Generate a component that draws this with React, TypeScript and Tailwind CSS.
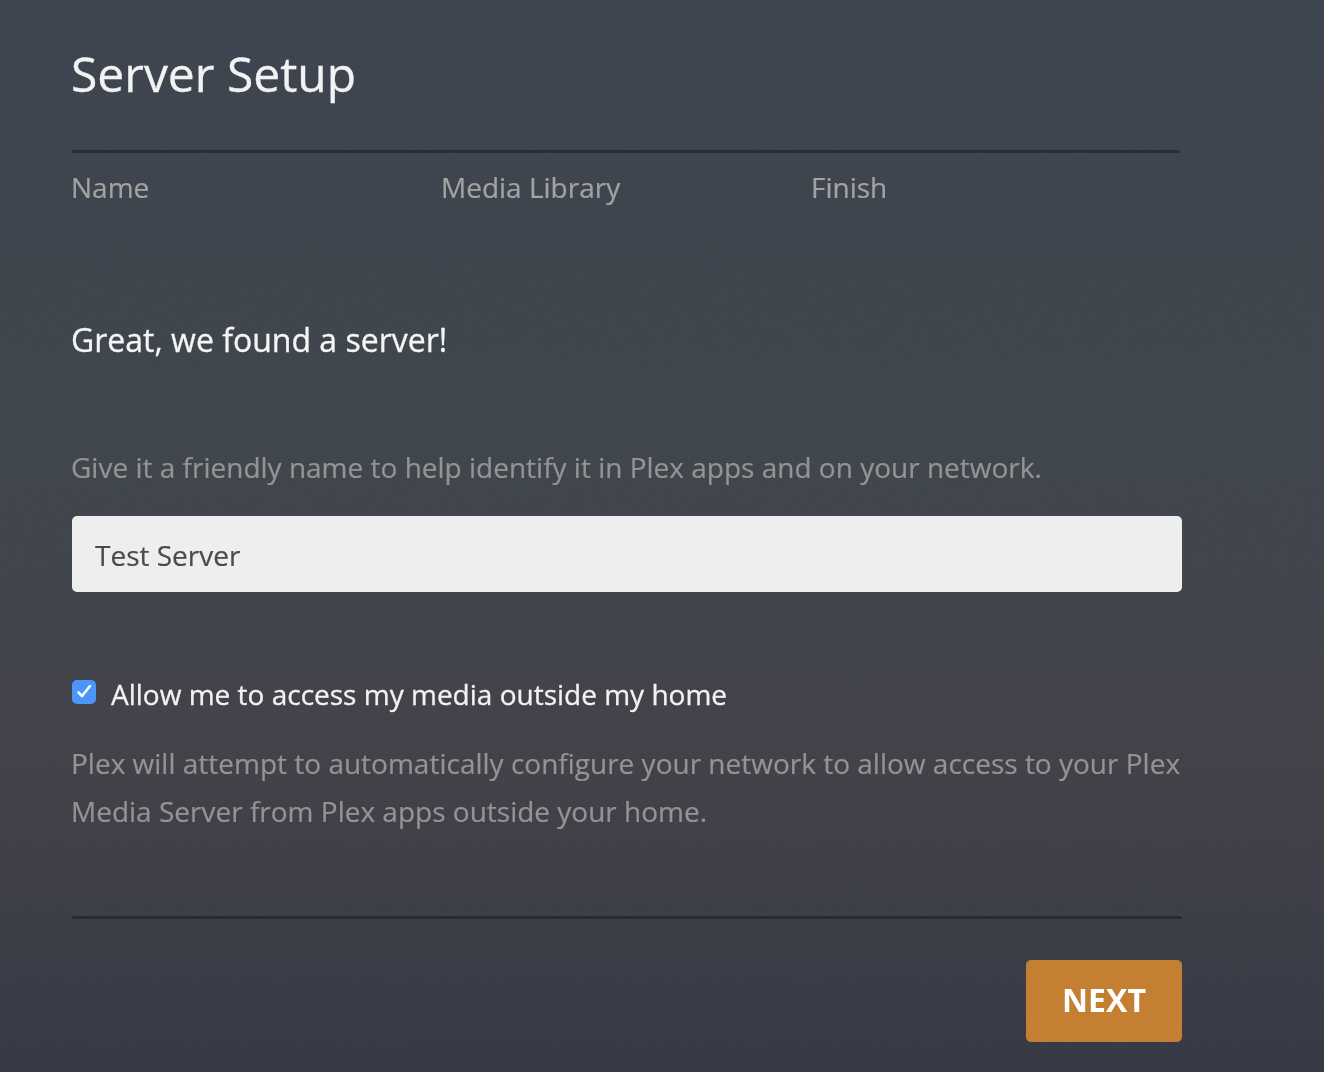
export default function App() {
  return (
    <div className="relative w-[1324px] h-[1072px] overflow-hidden bg-gradient-to-b from-[#3a424d] via-[#414047] via-70% to-[#343843] font-['Open_Sans',sans-serif]">
      <div className="absolute inset-0 bg-gradient-to-b from-transparent via-[#3e464c]/60 via-40% to-transparent to-70%" />
      <svg className="absolute inset-0 pointer-events-none mix-blend-overlay opacity-[0.14]" width="1324" height="1072" aria-hidden="true">
        <filter id="grain">
          <feTurbulence type="fractalNoise" baseFrequency="0.7" numOctaves="2" stitchTiles="stitch" />
          <feColorMatrix type="saturate" values="0" />
        </filter>
        <rect width="1324" height="1072" filter="url(#grain)" />
      </svg>
      <div className="relative pl-[72px] pr-[142px] pt-[44px]">
        <h1 className="text-[48px] leading-[60px] font-normal text-[#f2f2f2] h-[60px] -ml-[1px] [-webkit-text-stroke:0.3px_#f2f2f2]">Server Setup</h1>
        <div className="mt-[46px] w-[1108px] border-t-[3px] border-[#2a2e36]" />
        <div className="flex text-[28px] leading-[40px] text-[#a3a3a3] mt-[14px] -ml-[1px] [-webkit-text-stroke:0.2px_#a3a3a3]">
          <div className="w-[370px]">Name</div>
          <div className="w-[370px]">Media Library</div>
          <div>Finish</div>
        </div>
        <h2 className="mt-[111px] text-[32px] leading-[44px] text-[#f5f5f5] font-normal -ml-[1px] [-webkit-text-stroke:0.3px_#f5f5f5]">Great, we found a server!</h2>
        <p className="mt-[85px] text-[28px] leading-[40px] text-[#949494] whitespace-nowrap -ml-[1px] [-webkit-text-stroke:0.2px_#949494]">Give it a friendly name to help identify it in Plex apps and on your network.</p>
        <div className="mt-[29px] h-[76px] w-[1110px] rounded-[5px] bg-[#eeeeee] flex items-center pl-[23px] pt-[1px] text-[28px] text-[#4b4b4b] [-webkit-text-stroke:0.2px_#4b4b4b]">Test Server</div>
        <div className="mt-[84px] flex items-center h-[40px]">
          <span className="w-[24px] h-[24px] rounded-[5px] bg-[#4c96f8] mb-[8px]">
            <svg width="24" height="24" viewBox="0 0 24 24" fill="none" stroke="white" strokeWidth="2.5" strokeLinecap="round" strokeLinejoin="round"><path d="M6.5 12.5l3.5 3.5L18 6" /></svg>
          </span>
          <span className="ml-[15px] -mt-[4px] text-[28px] leading-[40px] text-[#f2f2f2] [-webkit-text-stroke:0.3px_#f2f2f2]">Allow me to access my media outside my home</span>
        </div>
        <p className="mt-[23px] text-[28px] leading-[48px] text-[#949494] w-[1114px] -ml-[1px] [-webkit-text-stroke:0.2px_#949494]">Plex will attempt to automatically configure your network to allow access to your Plex Media Server from Plex apps outside your home.</p>
        <div className="mt-[81px] w-[1110px] border-t-[3px] border-[#2a2b31]" />
        <div className="w-[1110px] flex justify-end mt-[41px]">
          <button className="w-[156px] h-[82px] rounded-[5px] bg-[#c57f33] text-white font-bold text-[32px] pb-[2px]">NEXT</button>
        </div>
      </div>
    </div>
  );
}
